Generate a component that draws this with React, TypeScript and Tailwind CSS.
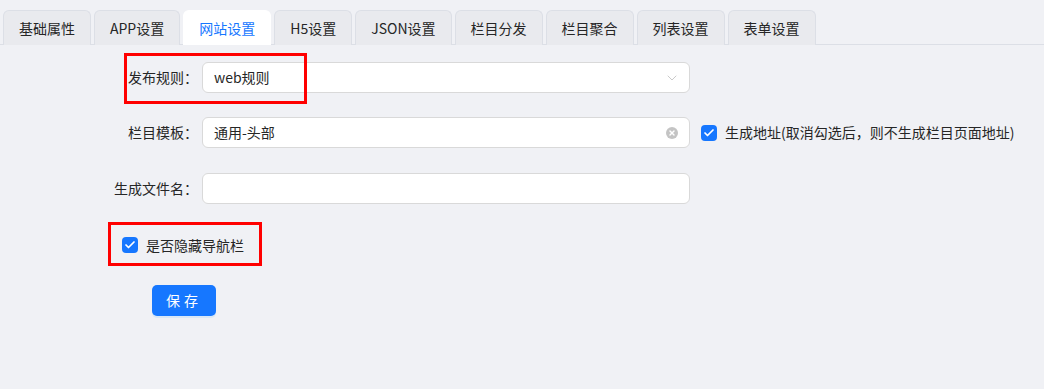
import { ChevronDown, Check, X } from "lucide-react";

const tabs = ["基础属性", "APP设置", "网站设置", "H5设置", "JSON设置", "栏目分发", "栏目聚合", "列表设置", "表单设置"];

function Checkbox() {
  return (
    <span className="flex h-4 w-4 shrink-0 items-center justify-center rounded-[4px] bg-[#1677ff]">
      <Check className="h-3 w-3 text-white" strokeWidth={3.5} />
    </span>
  );
}

function Label({ text }: { text: string }) {
  return <label className="w-[105px] shrink-0 pr-[4px] text-right">{text}</label>;
}

export default function App() {
  return (
    <div className="min-h-[389px] bg-[#f0f1f5] text-[14px] text-[#262626] [font-family:'Noto_Sans_CJK_SC',sans-serif]">
      {/* tabs */}
      <div className="flex gap-[3px] border-b border-[#dcdfe6] px-[3px] pt-[10px]">
        {tabs.map((t, i) => {
          const active = i === 2;
          return (
            <div
              key={t}
              className={`-mb-px flex h-[35px] items-center rounded-t-[6px] border border-b-0 px-[15px] ${
                active ? "border-white bg-white text-[#1677ff]" : "border-[#dcdfe6] bg-[#e9eaee]"
              }`}
            >
              {t}
            </div>
          );
        })}
      </div>

      {/* form */}
      <div className="flex flex-col pl-[97px] pt-[17px]">
        <div className="relative flex items-center">
          <Label text="发布规则：" />
          <div className="flex h-[31px] w-[488px] items-center justify-between rounded-[6px] border border-[#d9d9d9] bg-white pl-[11px] pr-[9px]">
            <span>web规则</span>
            <ChevronDown className="h-4 w-4 text-[#bfbfbf]" strokeWidth={1.25} />
          </div>
          <div className="absolute left-[27px] top-[-9px] h-[51px] w-[183px] border-[3px] border-[#ff0000]" />
        </div>

        <div className="mt-[24px] flex items-center">
          <Label text="栏目模板：" />
          <div className="flex h-[31px] w-[488px] items-center justify-between rounded-[6px] border border-[#d9d9d9] bg-white px-[11px]">
            <span>通用-头部</span>
            <span className="flex h-3 w-3 items-center justify-center rounded-full bg-[#c4c4c4]">
              <X className="h-2 w-2 text-white" strokeWidth={4} />
            </span>
          </div>
          <div className="ml-[11px] flex items-center gap-2">
            <Checkbox />
            <span>生成地址(取消勾选后，则不生成栏目页面地址)</span>
          </div>
        </div>

        <div className="mt-[25px] flex items-center">
          <Label text="生成文件名：" />
          <div className="h-[31px] w-[488px] rounded-[6px] border border-[#d9d9d9] bg-white" />
        </div>

        <div className="relative ml-[25px] mt-[33px] flex h-4 items-center gap-2">
          <Checkbox />
          <span>是否隐藏导航栏</span>
          <div className="absolute left-[-14px] top-[-15px] h-[44px] w-[154px] border-[3px] border-[#ff0000]" />
        </div>

        <button className="ml-[55px] mt-[32px] h-[31px] w-[64px] rounded-[5px] bg-[#1677ff] text-white tracking-[4px] shadow-[0_2px_0_rgba(5,145,255,0.1)]">
          保存
        </button>
      </div>
    </div>
  );
}
